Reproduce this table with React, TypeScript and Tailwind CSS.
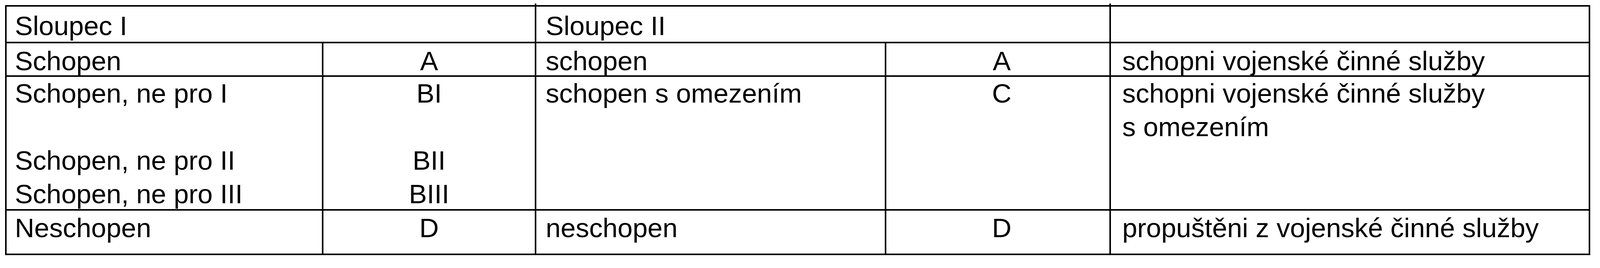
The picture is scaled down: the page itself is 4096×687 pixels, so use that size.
const rows = [
  {
    h: 'pt-[3px]',
    cells: [['Schopen'], ['A'], ['schopen'], ['A'], ['schopni vojenské činné služby']],
  },
  {
    h: 'pt-0',
    cells: [
      ['Schopen, ne pro I', '', 'Schopen, ne pro II', 'Schopen, ne pro III'],
      ['BI', '', 'BII', 'BIII'],
      ['schopen s omezením'],
      ['C'],
      ['schopni vojenské činné služby', 's omezením'],
    ],
  },
  {
    h: 'pt-[2px]',
    cells: [['Neschopen'], ['D'], ['neschopen'], ['D'], ['propuštěni z vojenské činné služby']],
  },
];

// per-column alignment
const colClass = [
  'pl-[21px]',
  'text-center',
  'pl-[24px]',
  'pl-[20px] text-center',
  'pl-[29px]',
];

function Lines({ lines }: { lines: string[] }) {
  return (
    <>
      {lines.map((l, i) => (
        <div key={i} className="whitespace-nowrap">
          {l === '' ? '\u00a0' : l}
        </div>
      ))}
    </>
  );
}

export default function App() {
  return (
    <div className="min-h-[687px] w-[4096px] bg-white pl-[13px] pt-[13px]">
      <div className="grid w-[4058px] grid-cols-[807px_541px_892px_571px_1223px] grid-rows-[90px_82px_339px_110px] gap-[4px] border-[4px] border-black bg-black font-[family-name:'Liberation_Sans',Arial,sans-serif] text-[69px] leading-[86px] text-black">
        <div className="col-span-2 bg-white pl-[21px] pt-[7px]">Sloupec I</div>
        <div className="relative col-span-2 bg-white pl-[24px] pt-[7px]">
          <span className="absolute -left-[4px] -top-[8px] h-[4px] w-[4px] bg-black" />
          Sloupec II
        </div>
        <div className="relative bg-white">
          <span className="absolute -left-[4px] -top-[8px] h-[4px] w-[4px] bg-black" />
        </div>

        {rows.map((row, r) =>
          row.cells.map((lines, c) => (
            <div key={`${r}-${c}`} className={`bg-white ${row.h} ${colClass[c]}`}>
              <Lines lines={lines} />
            </div>
          )),
        )}
      </div>
    </div>
  );
}
